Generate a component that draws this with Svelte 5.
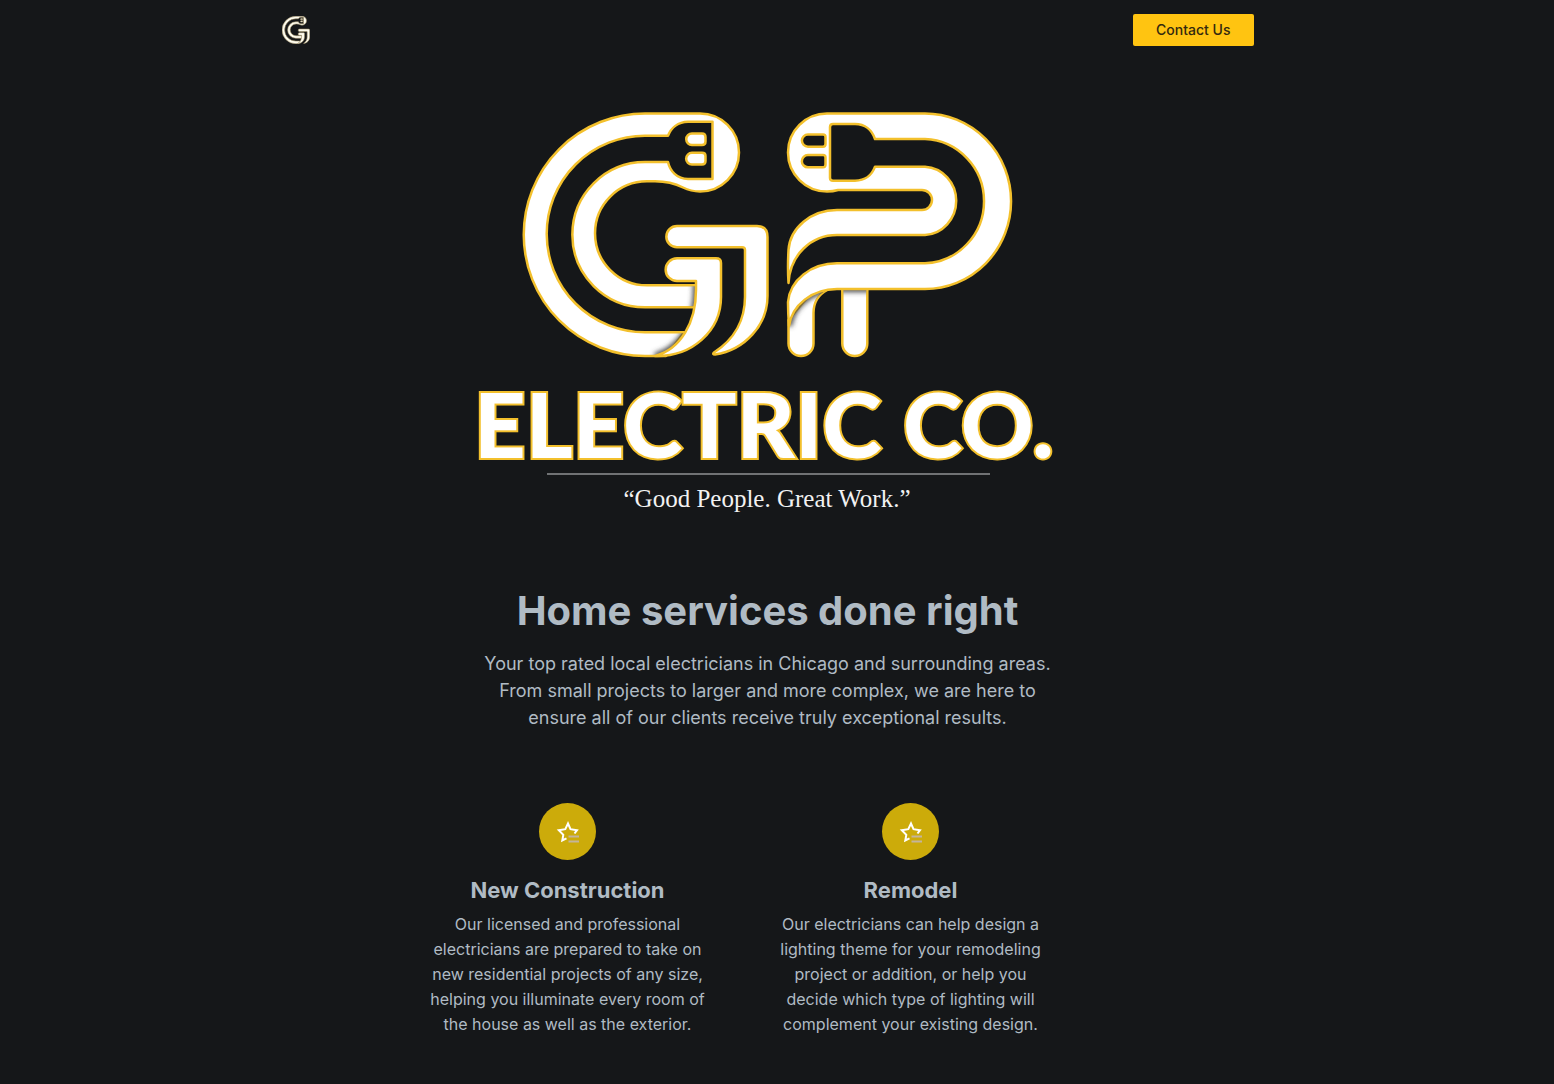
<script>
  const services = [
    {
      title: 'New Construction',
      text: 'Our licensed and professional electricians are prepared to take on new residential projects of any size, helping you illuminate every room of the house as well as the exterior.'
    },
    {
      title: 'Remodel',
      text: 'Our electricians can help design a lighting theme for your remodeling project or addition, or help you decide which type of lighting will complement your existing design.'
    }
  ];
</script>

{#snippet letterG(shade)}
  <path d="M645 113.5H700A39 39 0 0 1 700 191.5C693 191.5 688 190 683 187.5C674 183 665 181.300 655 181.300H647A52 52 0 0 0 647 285.300H697V307.300H645A72 72 0 0 1 645 162H668C670 171 677 179 688 179H712.500V121.700H688C678 122 671 128 668 135.700H645A98 98 0 0 0 645 332.300H684L666 356H645A121 121 0 0 1 645 113.500Z" />
  <path d="M692 133.500H702Q705.500 133.500 705.500 137V141.500Q705.500 145 702 145H692A5.700 5.700 0 0 1 692 133.500ZM692 152.800H702Q705.500 152.800 705.500 156V161Q705.500 164.500 702 164.500H692A5.700 5.700 0 0 1 692 152.800Z" />
  {#if shade}
    <g clip-path="url(#g-ends)">
      <path class="shadow" d="M655 356C681 349 696 322 696 290V281" />
    </g>
  {/if}
  <path d="M677 226H757Q767.500 226 767.500 237V296C767.500 325 745 350 715 354.500Q712 354.500 714 352.500C735 339 745 319 745 297V250Q745 247.300 742 247.300H677A10.600 10.600 0 0 1 677 226Z" />
  <path d="M677 258.300H716Q721 258.300 721 263V297C721 331 692 357 655 356C681 349 696 322 696 290V281H677A11.300 11.300 0 0 1 677 258.300Z" />
{/snippet}

<div class="page">
  <header>
    <a class="home" href="/" aria-label="GP Electric Co. home">
      <svg class="mark" viewBox="523 111 247 247" aria-hidden="true">{@render letterG(false)}</svg>
    </a>
    <a class="button" href="#contact">Contact Us</a>
  </header>

  <main>
    <section class="hero">
      <svg class="logo" viewBox="468 108 600 410" role="img" aria-label="GP Electric Co. Good People. Great Work.">
        <defs>
          <clipPath id="g-ends">
            <path d="M650 286.300H697V306.300H650ZM640 333.300H697V355H640Z" />
          </clipPath>
          <clipPath id="p-legs">
            <path d="M843.300 286V350H866.300V286ZM789.500 320V350H812.500V313C812.500 303 817 295 827 290L812 280Z" />
          </clipPath>
          <filter id="soft" x="-20%" y="-20%" width="140%" height="140%">
            <feGaussianBlur stdDeviation="2.500" />
          </filter>
        </defs>
        <g class="shape">
          {@render letterG(true)}
          <path d="M842.300 286V343.500A12.500 12.500 0 0 0 867.300 343.500V286Z" />
          <path d="M788.500 320V343.500A12.500 12.500 0 0 0 813.500 343.500V313C813.500 303 818 295 827 290L812 292Z" />
          <g clip-path="url(#p-legs)">
            <path class="shadow" d="M880 289H837C812 289 792 305 789 326" />
          </g>
          <path d="M827 113.500H925A86 87.700 0 0 1 925 289H837C812 289 792 305 789 326Q788 313 788 302C790 280 811 263.300 837 263.300H925A61.500 62.200 0 0 0 925 139H875C872 130 865 124 855 124H833Q830 124 830 127V178Q830 180.700 833 180.700H855C865 180.700 872 175 875 166.700H925A33 34.200 0 0 1 925 235H837C811 235 790 255 788.500 283Q787.500 268 788.500 250C790 228 811 210 837 210H922A10 10 0 0 0 922 190H838Q833 191.500 827 191.500A39 39 0 0 1 827 113.500Z" />
          <path class="hole" d="M808 134.500H823Q825.500 134.500 825.500 137V144Q825.500 146.700 823 146.700H808A6 6 0 0 1 808 134.500ZM808 155H823Q825.500 155 825.500 157.500V164.500Q825.500 167.300 823 167.300H808A6 6 0 0 1 808 155Z" />
        </g>
        <text class="name" x="474" y="458">ELECTRIC</text>
        <text class="name" x="903" y="458">CO.</text>
        <path class="rule" d="M547 474H990" />
        <text class="tagline" x="767" y="507" text-anchor="middle">“Good People. Great Work.”</text>
      </svg>
      <h1>Home services done right</h1>
      <p>Your top rated local electricians in Chicago and surrounding areas. From small projects to larger and more complex, we are here to ensure all of our clients receive truly exceptional results.</p>
    </section>

    <section class="services">
      {#each services as service}
        <article>
          <span class="badge">
            <svg viewBox="0 0 24 24" aria-hidden="true">
              <path class="star" d="M18.500 13.500L21 10.200L14.500 9.200L12 3.500L9.300 9.200L2.800 10.200L7.300 14.800L6.300 20.500L10.500 18.300" />
              <path class="lines" d="M12.500 16.500H23M12.500 21.500H23" />
            </svg>
          </span>
          <h2>{service.title}</h2>
          <p>{service.text}</p>
        </article>
      {/each}
    </section>
  </main>
</div>

<style>
  :global(body) {
    margin: 0;
    background: #151719;
  }
  .page {
    padding-right: 19px;
    color: #b0bbc4;
    font-family: Inter, "Liberation Sans", sans-serif;
    background: #151719;
  }
  header {
    display: flex;
    align-items: center;
    justify-content: space-between;
    max-width: 972px;
    height: 60px;
    margin: 0 auto;
  }
  .home {
    display: flex;
  }
  .mark {
    width: 28px;
    height: 28px;
    fill: #fffdf0;
    stroke: #a3936a;
    stroke-width: 5;
  }
  .button {
    padding: 0 23px;
    border-radius: 2px;
    background: #ffc411;
    color: #33290f;
    font-size: 14px;
    font-weight: 500;
    line-height: 32px;
    text-decoration: none;
  }
  .hero {
    display: flex;
    flex-direction: column;
    align-items: center;
    padding: 48px 24px 0;
    text-align: center;
  }
  .logo {
    width: 100%;
    max-width: 600px;
    height: auto;
  }
  .shape {
    fill: #fff;
    stroke: #f3c02c;
    stroke-width: 2.500;
    stroke-linejoin: round;
  }
  .shadow {
    fill: none;
    stroke: #444;
    stroke-width: 6;
    filter: url(#soft);
  }
  .hole {
    fill: #151719;
  }
  .name {
    fill: #fff;
    stroke: #f3c02c;
    stroke-width: 4;
    paint-order: stroke;
    font-family: Lato, sans-serif;
    font-size: 90px;
    font-weight: 900;
  }
  .rule {
    stroke: #707274;
    stroke-width: 2;
  }
  .tagline {
    fill: #f2f2f2;
    font-family: "Liberation Serif", serif;
    font-size: 25px;
  }
  h1 {
    margin: 67px 0 0;
    font-size: 40px;
    font-weight: 700;
    line-height: 52px;
  }
  .hero p {
    max-width: 572px;
    margin: 13px 0 0;
    font-size: 18px;
    line-height: 27px;
  }
  .services {
    display: flex;
    flex-wrap: wrap;
    max-width: 743px;
    margin: 72px auto 0;
  }
  article {
    box-sizing: border-box;
    width: 343px;
    padding: 0 32px 48px;
    text-align: center;
  }
  .badge {
    display: flex;
    align-items: center;
    justify-content: center;
    width: 57px;
    height: 57px;
    margin: 0 auto;
    border-radius: 50%;
    background: #ccab0a;
  }
  .badge svg {
    width: 24px;
    height: 24px;
    fill: none;
    stroke-width: 2;
  }
  .star {
    stroke: #fff;
  }
  .lines {
    stroke: #c3b49c;
  }
  h2 {
    margin: 14px 0 0;
    font-size: 22px;
    font-weight: 700;
    line-height: 32px;
  }
  article p {
    margin: 6px 0 0;
    font-size: 16px;
    line-height: 25px;
  }
</style>
